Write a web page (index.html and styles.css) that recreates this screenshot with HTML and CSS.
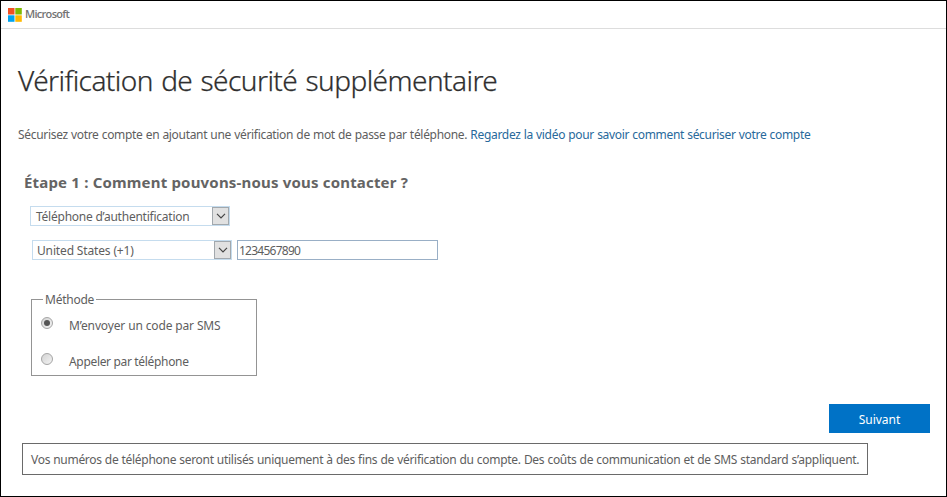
FILE: index.html
```html
<!DOCTYPE html>
<html lang="fr">
<head>
<meta charset="utf-8">
<title>Vérification de sécurité supplémentaire</title>
<link rel="stylesheet" href="styles.css">
</head>
<body>
<div class="page">
  <header class="header">
    <svg class="logo" width="14" height="14" viewBox="0 0 14 14">
      <rect width="6.5" height="6.5" fill="#f25022"/>
      <rect x="7.3" width="6.5" height="6.5" fill="#7fba00"/>
      <rect y="7.3" width="6.5" height="6.5" fill="#00a4ef"/>
      <rect x="7.3" y="7.3" width="6.5" height="6.5" fill="#ffb900"/>
    </svg>
    <span class="brand">Microsoft</span>
  </header>
  <main class="main">
    <h1 class="title">Vérification de sécurité supplémentaire</h1>
    <p class="intro"><span class="intro-text">Sécurisez votre compte en ajoutant une vérification de mot de passe par téléphone.</span> <a class="link">Regardez la vidéo pour savoir comment sécuriser votre compte</a></p>
    <h2 class="step">Étape 1 : Comment pouvons-nous vous contacter ?</h2>
    <div class="select select-phone">
      <span class="select-text phone-text">Téléphone d’authentification</span>
      <span class="arrow"><svg width="10" height="6" viewBox="0 0 10 6"><path d="M1 .8 5 4.8 9 .8" fill="none" stroke="#444" stroke-width="1.2"/></svg></span>
    </div>
    <div class="row">
      <div class="select">
        <span class="select-text country-text">United States (+1)</span>
        <span class="arrow"><svg width="10" height="6" viewBox="0 0 10 6"><path d="M1 .8 5 4.8 9 .8" fill="none" stroke="#444" stroke-width="1.2"/></svg></span>
      </div>
      <div class="number"><span class="number-text">1234567890</span></div>
    </div>
    <fieldset class="method">
      <legend class="legend">Méthode</legend>
      <div class="options">
        <div class="option"><span class="radio checked"></span><span class="option-text sms">M’envoyer un code par SMS</span></div>
        <div class="option"><span class="radio"></span><span class="option-text call">Appeler par téléphone</span></div>
      </div>
    </fieldset>
    <div class="actions"><div class="next"><span class="next-text">Suivant</span></div></div>
    <div class="notice"><span class="notice-text">Vos numéros de téléphone seront utilisés uniquement à des fins de vérification du compte. Des coûts de communication et de SMS standard s’appliquent.</span></div>
  </main>
</div>
</body>
</html>
```
FILE: styles.css
```css
* { box-sizing: border-box; }
body { margin: 0; background: #fff; font: 12px/18px "Noto Sans", "Open Sans", sans-serif; color: #5e5e5e; }
.page { width: 947px; height: 497px; border: 1px solid #000; overflow: hidden; white-space: nowrap; }
.header { height: 28px; border-bottom: 1px solid #ddd; display: flex; align-items: center; padding-left: 7px; }
.logo { display: block; }
.brand { font: 600 11px/14px "Open Sans", sans-serif; color: #737373; margin: -1px 0 0 3px; letter-spacing: -0.7px; }
.main { padding: 31px 16px 0 17px; }
.title { margin: 0; font: 300 28px/40px "Noto Sans", "Open Sans", sans-serif; color: #2f2f2f; letter-spacing: -0.55px; word-spacing: 1.5px; -webkit-text-stroke: 0.25px #2f2f2f; }
.intro { margin: 26px 0 0; letter-spacing: -0.31px; word-spacing: 0.32px; }
.link { color: #28699b; }
.step { margin: 28px 0 0 6px; font-size: 15px; line-height: 20px; font-weight: 700; color: #646464; letter-spacing: 0.18px; }
.select { width: 200px; height: 20px; border: 1px solid #c5dcee; display: flex; justify-content: space-between; }
.select-phone { margin: 14px 0 0 12px; }
.select-text { padding-left: 4px; line-height: 19px; }
.phone-text { padding-left: 5px; letter-spacing: -0.24px; }
.country-text { letter-spacing: -0.15px; }
.arrow { width: 17px; height: 18px; border: 1px solid #a2a8ad; background: #e1e1e1; display: flex; align-items: center; justify-content: center; }
.row { display: flex; gap: 5px; margin: 14px 0 0 14px; }
.number { width: 201px; height: 20px; border: 1px solid #99afc6; padding-left: 1px; line-height: 19px; letter-spacing: -0.75px; }
.method { width: 226px; height: 85px; margin: 31px 0 0 13px; padding: 0 0 0 9px; border: 1px solid #949494; }
.legend { padding: 2px 2px 0; margin-left: 2px; line-height: 14px; letter-spacing: -0.25px; }
.options { padding-top: 1px; }
.option { display: flex; height: 36px; align-items: flex-start; padding-top: 9px; }
.radio { width: 12px; height: 12px; border: 1px solid #a5a5a5; border-radius: 50%; background: linear-gradient(135deg, #d3d3d3, #f3f3f3); display: flex; align-items: center; justify-content: center; }
.checked::after { content: ""; width: 6px; height: 6px; border-radius: 50%; background: #555; }
.option-text { margin-left: 16px; }
.sms { letter-spacing: -0.14px; }
.call { letter-spacing: -0.33px; }
.actions { display: flex; justify-content: flex-end; margin-top: 28px; }
.next { width: 101px; height: 29px; background: #0072c6; color: #fff; text-align: center; line-height: 32px; }
.notice { width: 846px; height: 32px; margin: 10px 0 0 4px; border: 1px solid #6a6a6a; padding-left: 8px; line-height: 32px; letter-spacing: -0.295px; word-spacing: 0.32px; }
```
